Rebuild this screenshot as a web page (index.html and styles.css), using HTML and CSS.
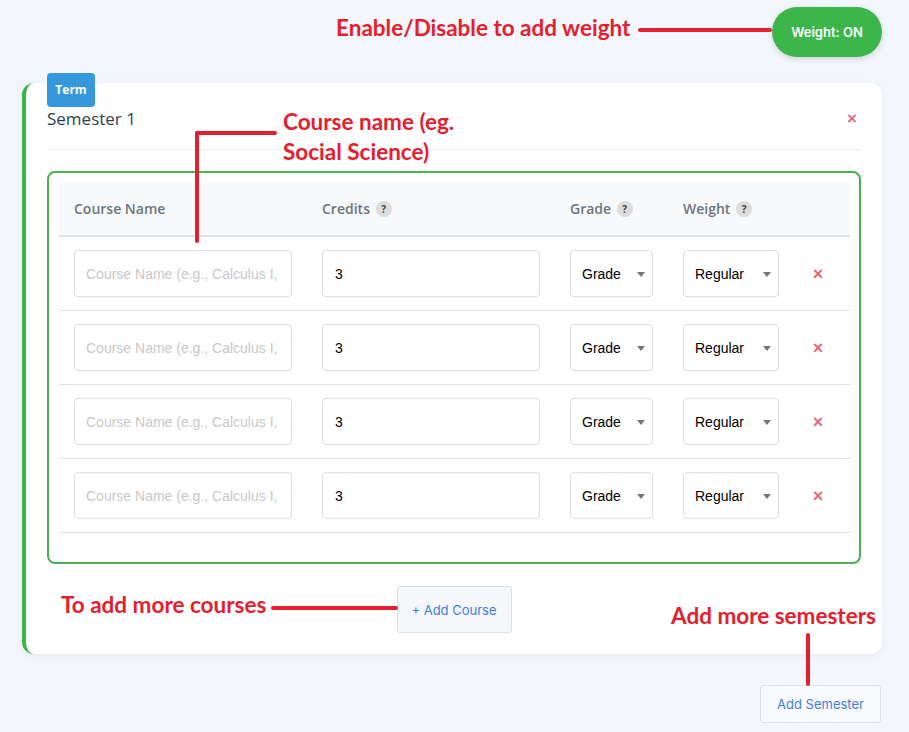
FILE: index.html
```html
<!DOCTYPE html>
<html lang="en">
<head>
    <meta charset="UTF-8">
    <meta name="viewport" content="width=device-width, initial-scale=1.0">
    <title>GPA Calculator</title>
    <link rel="stylesheet" href="styles.css">
</head>
<body>
    <div class="page">
        <div class="top-bar">
            <button class="weight-toggle">Weight: ON</button>
        </div>

        <section class="semester-card">
            <span class="term-badge">Term</span>
            <div class="semester-head">
                <h2>Semester 1</h2>
                <button class="remove-semester">&times;</button>
            </div>

            <div class="course-box">
                <table class="course-table">
                    <colgroup>
                        <col class="col-name">
                        <col class="col-credits">
                        <col class="col-grade">
                        <col class="col-weight">
                        <col class="col-action">
                    </colgroup>
                    <thead>
                        <tr>
                            <th>Course Name</th>
                            <th>Credits <span class="help">?</span></th>
                            <th>Grade <span class="help">?</span></th>
                            <th>Weight <span class="help">?</span></th>
                            <th></th>
                        </tr>
                    </thead>
                    <tbody>
                        <tr>
                            <td><input type="text" class="course-input" placeholder="Course Name (e.g., Calculus I, Biology)"></td>
                            <td><input type="text" class="credit-input" value="3"></td>
                            <td><span class="select-wrap"><select class="grade-select"><option>Grade</option></select></span></td>
                            <td><span class="select-wrap"><select class="weight-select"><option>Regular</option></select></span></td>
                            <td class="action-cell"><button class="remove-course">&times;</button></td>
                        </tr>
                        <tr>
                            <td><input type="text" class="course-input" placeholder="Course Name (e.g., Calculus I, Biology)"></td>
                            <td><input type="text" class="credit-input" value="3"></td>
                            <td><span class="select-wrap"><select class="grade-select"><option>Grade</option></select></span></td>
                            <td><span class="select-wrap"><select class="weight-select"><option>Regular</option></select></span></td>
                            <td class="action-cell"><button class="remove-course">&times;</button></td>
                        </tr>
                        <tr>
                            <td><input type="text" class="course-input" placeholder="Course Name (e.g., Calculus I, Biology)"></td>
                            <td><input type="text" class="credit-input" value="3"></td>
                            <td><span class="select-wrap"><select class="grade-select"><option>Grade</option></select></span></td>
                            <td><span class="select-wrap"><select class="weight-select"><option>Regular</option></select></span></td>
                            <td class="action-cell"><button class="remove-course">&times;</button></td>
                        </tr>
                        <tr>
                            <td><input type="text" class="course-input" placeholder="Course Name (e.g., Calculus I, Biology)"></td>
                            <td><input type="text" class="credit-input" value="3"></td>
                            <td><span class="select-wrap"><select class="grade-select"><option>Grade</option></select></span></td>
                            <td><span class="select-wrap"><select class="weight-select"><option>Regular</option></select></span></td>
                            <td class="action-cell"><button class="remove-course">&times;</button></td>
                        </tr>
                    </tbody>
                </table>
            </div>

            <div class="card-actions">
                <button class="add-course">+ Add Course</button>
            </div>
        </section>

        <div class="page-actions">
            <button class="add-semester">Add Semester</button>
        </div>

        <!-- annotations -->
        <div class="note note-weight">Enable/Disable to add weight</div>
        <div class="note-line line-weight"></div>

        <div class="note note-name">Course name (eg.<br>Social Science)</div>
        <div class="note-line line-name-h"></div>
        <div class="note-line line-name-v"></div>

        <div class="note note-course">To add more courses</div>
        <div class="note-line line-course"></div>

        <div class="note note-semester">Add more semesters</div>
        <div class="note-line line-semester"></div>
    </div>
</body>
</html>
```

FILE: styles.css
```css
* {
    margin: 0;
    padding: 0;
    box-sizing: border-box;
}

body {
    font-family: 'Open Sans', 'Liberation Sans', sans-serif;
    background: #f3f6fb;
    color: #2c3e50;
}

.page {
    position: relative;
    width: 860px;
    margin-left: 22px;
    padding-top: 7px;
    padding-bottom: 9px;
}

.top-bar {
    display: flex;
    justify-content: flex-end;
    margin-bottom: 26px;
}

.weight-toggle {
    width: 110px;
    height: 50px;
    border: none;
    border-radius: 25px;
    background: #3cb54a;
    color: white;
    font-family: 'Inter', sans-serif;
    font-weight: 600;
    font-size: 13px;
    box-shadow: 0 2px 6px rgba(0,0,0,0.15);
    cursor: pointer;
}

.semester-card {
    position: relative;
    background: white;
    border-left: 4px solid #3cb54a;
    border-radius: 12px;
    padding: 25px 21px 21px 21px;
    box-shadow: 0 2px 10px rgba(0,0,0,0.05);
}

.term-badge {
    position: absolute;
    top: -10px;
    left: 21px;
    width: 48px;
    height: 34px;
    line-height: 34px;
    text-align: center;
    background: #3498db;
    color: white;
    font-size: 12px;
    font-weight: 700;
    border-radius: 4px;
}

.semester-head {
    display: flex;
    justify-content: space-between;
    align-items: center;
    padding-bottom: 19px;
    border-bottom: 1px solid #eceef0;
    margin-bottom: 21px;
}

.semester-head h2 {
    font-size: 17px;
    font-weight: 400;
    line-height: 22px;
    color: #2c3e50;
}

.remove-semester {
    background: none;
    border: none;
    color: #e06c80;
    font-size: 17px;
    font-weight: 600;
    margin-right: 4px;
    cursor: pointer;
}

.course-box {
    border: 2px solid #4caf50;
    border-radius: 8px;
    padding: 10px 10px 29px 10px;
}

.course-table {
    width: 791px;
    border-collapse: collapse;
    table-layout: fixed;
}

.col-name, .col-credits { width: 248px; }
.col-grade { width: 113px; }
.col-weight { width: 126px; }
.col-action { width: 56px; }

.course-table th {
    background: #f8f9fa;
    text-align: left;
    padding: 15px;
    line-height: 22px;
    font-size: 14px;
    font-weight: 600;
    color: #6c757d;
    border-bottom: 2px solid #dee2e6;
}

.help {
    display: inline-block;
    width: 16px;
    height: 16px;
    line-height: 16px;
    border-radius: 50%;
    background: #dcdcdc;
    color: #444;
    font-size: 10px;
    font-weight: 700;
    text-align: center;
    vertical-align: 1px;
    margin-left: 2px;
}

.course-table td {
    padding: 13px 15px;
    border-bottom: 1px solid #dee2e6;
    vertical-align: middle;
}

.course-input,
.credit-input {
    display: block;
    width: 100%;
    height: 47px;
    border: 1px solid #ddd;
    border-radius: 4px;
    font-family: 'Liberation Sans', Arial, sans-serif;
    font-size: 14px;
    color: #000;
    outline: none;
}

.course-input { padding: 0 11px; }
.credit-input { padding: 0 12px; }

.course-input::placeholder {
    color: #c8c8c8;
}

.select-wrap {
    position: relative;
    display: inline-block;
}

.select-wrap::after {
    content: '';
    position: absolute;
    right: 8px;
    top: 22px;
    border-left: 4px solid transparent;
    border-right: 4px solid transparent;
    border-top: 5px solid #777;
    pointer-events: none;
}

.grade-select,
.weight-select {
    appearance: none;
    -webkit-appearance: none;
    height: 47px;
    border: 1px solid #ddd;
    border-radius: 4px;
    background: white;
    padding-left: 11px;
    font-family: 'Liberation Sans', Arial, sans-serif;
    font-size: 14px;
    color: #000;
    outline: none;
}

.grade-select { width: 83px; }
.weight-select { width: 96px; }

.action-cell {
    text-align: center;
}

.remove-course {
    background: none;
    border: none;
    color: #e06c80;
    font-size: 18px;
    font-weight: 700;
    margin-right: 8px;
    cursor: pointer;
}

.card-actions {
    display: flex;
    justify-content: center;
    margin-top: 22px;
}

.add-course {
    width: 115px;
    height: 47px;
    background: #f5f7fa;
    border: 1px solid #dde1e6;
    border-radius: 3px;
    color: #3f7ee0;
    font-family: 'Inter', sans-serif;
    font-size: 13px;
    cursor: pointer;
}

.page-actions {
    display: flex;
    justify-content: flex-end;
    margin-top: 31px;
    margin-right: 1px;
}

.add-semester {
    width: 121px;
    height: 38px;
    background: #f8fafd;
    border: 1px solid #dde1e6;
    border-radius: 3px;
    color: #3f7ee0;
    font-family: 'Inter', sans-serif;
    font-size: 13px;
    cursor: pointer;
}

/* annotations drawn over the screenshot */
.note {
    position: absolute;
    font-family: 'Lato', sans-serif;
    font-weight: 700;
    font-size: 22.5px;
    line-height: 30px;
    color: #e3202f;
    white-space: nowrap;
}

.note-line {
    position: absolute;
    background: #e3202f;
    border-radius: 2px;
}

.note-weight { left: 314px; top: 13px; }
.line-weight { left: 616px; top: 28px; width: 134px; height: 4px; }

.note-name { left: 261px; top: 107px; }
.line-name-h { left: 173px; top: 131px; width: 82px; height: 4px; }
.line-name-v { left: 173px; top: 131px; width: 4px; height: 112px; }

.note-course { left: 39px; top: 590px; }
.line-course { left: 249px; top: 606px; width: 127px; height: 4px; }

.note-semester { left: 649px; top: 601px; }
.line-semester { left: 784px; top: 633px; width: 4px; height: 53px; }
```
